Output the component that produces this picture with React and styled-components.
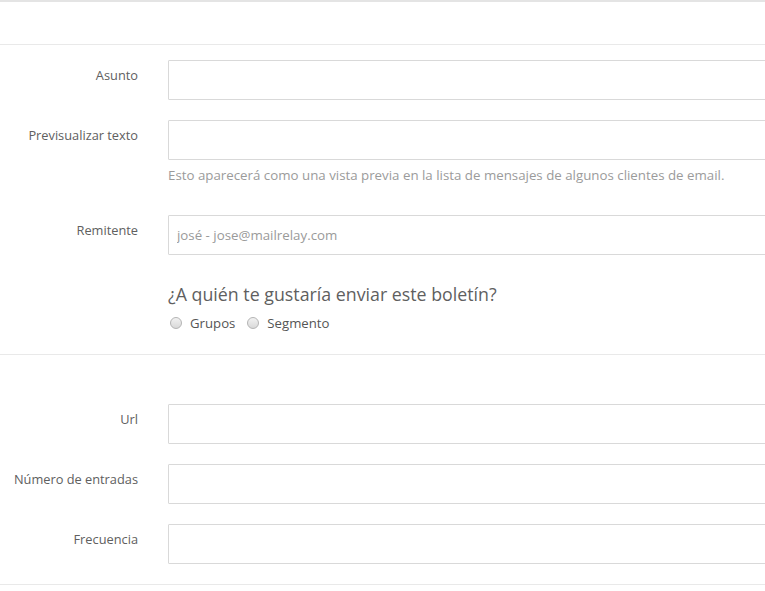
import React from "react";
import styled, { createGlobalStyle } from "styled-components";

const GlobalStyle = createGlobalStyle`
    html, body {
        margin: 0;
        padding: 0;
        background: #ffffff;
        overflow: hidden;
    }
    body {
        font-family: "Open Sans", Lato, "Liberation Sans", sans-serif;
        color: #555555;
    }
`;

const Page = styled.div`
    width: 765px;
    overflow: hidden;
    border-top: 2px solid #e4e4e4;
`;

const Header = styled.div`
    height: 42px;
    border-bottom: 1px solid #e9e9e9;
`;

const Section = styled.section`
    padding: ${(p) => p.$pad || "15px 0 20px"};
    border-bottom: 1px solid #e9e9e9;
`;

const Row = styled.div`
    display: grid;
    grid-template-columns: 138px 640px;
    column-gap: 30px;
    margin-bottom: ${(p) => p.$mb ?? 20}px;
`;

const Label = styled.label`
    text-align: right;
    font-size: 12.8px;
    line-height: 18px;
    padding-top: 6px;
    color: #606060;
    white-space: nowrap;
`;

const Field = styled.div`
    display: flex;
    flex-direction: column;
`;

const Input = styled.input`
    box-sizing: border-box;
    height: 40px;
    width: 100%;
    border: 1px solid #d9d9d9;
    border-radius: 1px;
    padding: 0 8px;
    font-family: inherit;
    font-size: 13.3px;
    color: #555;
    outline: none;
    &::placeholder {
        color: #9a9a9a;
    }
`;

const Help = styled.div`
    margin-top: 6px;
    font-size: 13.3px;
    line-height: 18px;
    color: #9b9b9b;
    white-space: nowrap;
`;

const Question = styled.h3`
    margin: 0;
    font-weight: 400;
    font-size: 17.8px;
    line-height: 24px;
    color: #5f5f5f;
`;

const Options = styled.div`
    display: flex;
    align-items: center;
    gap: 10px;
    margin-top: 8px;
`;

const Option = styled.label`
    display: flex;
    align-items: center;
    gap: 8px;
    font-size: 13.2px;
    line-height: 18px;
    color: #555;
`;

const Radio = styled.input.attrs({ type: "radio" })`
    appearance: none;
    margin: 0 0 0 2px;
    width: 12px;
    height: 12px;
    border-radius: 50%;
    border: 1px solid #b4b4b4;
    background: linear-gradient(#f2f2f2, #d9d9d9);
`;

export default function App() {
    return (
        <Page>
            <GlobalStyle />
            <Header />
            <Section $pad="15px 0 22px">
                <Row>
                    <Label>Asunto</Label>
                    <Field>
                        <Input />
                    </Field>
                </Row>
                <Row $mb={31}>
                    <Label>Previsualizar texto</Label>
                    <Field>
                        <Input />
                        <Help>
                            Esto aparecerá como una vista previa en la lista de mensajes de algunos clientes de email.
                        </Help>
                    </Field>
                </Row>
                <Row $mb={27}>
                    <Label>Remitente</Label>
                    <Field>
                        <Input placeholder="josé - jose@mailrelay.com" />
                    </Field>
                </Row>
                <Row $mb={0}>
                    <div />
                    <Field>
                        <Question>¿A quién te gustaría enviar este boletín?</Question>
                        <Options>
                            <Option>
                                <Radio name="to" />
                                Grupos
                            </Option>
                            <Option>
                                <Radio name="to" />
                                Segmento
                            </Option>
                        </Options>
                    </Field>
                </Row>
            </Section>
            <Section $pad="49px 0 0">
                <Row>
                    <Label>Url</Label>
                    <Field>
                        <Input />
                    </Field>
                </Row>
                <Row>
                    <Label>Número de entradas</Label>
                    <Field>
                        <Input />
                    </Field>
                </Row>
                <Row>
                    <Label>Frecuencia</Label>
                    <Field>
                        <Input />
                    </Field>
                </Row>
            </Section>
        </Page>
    );
}
